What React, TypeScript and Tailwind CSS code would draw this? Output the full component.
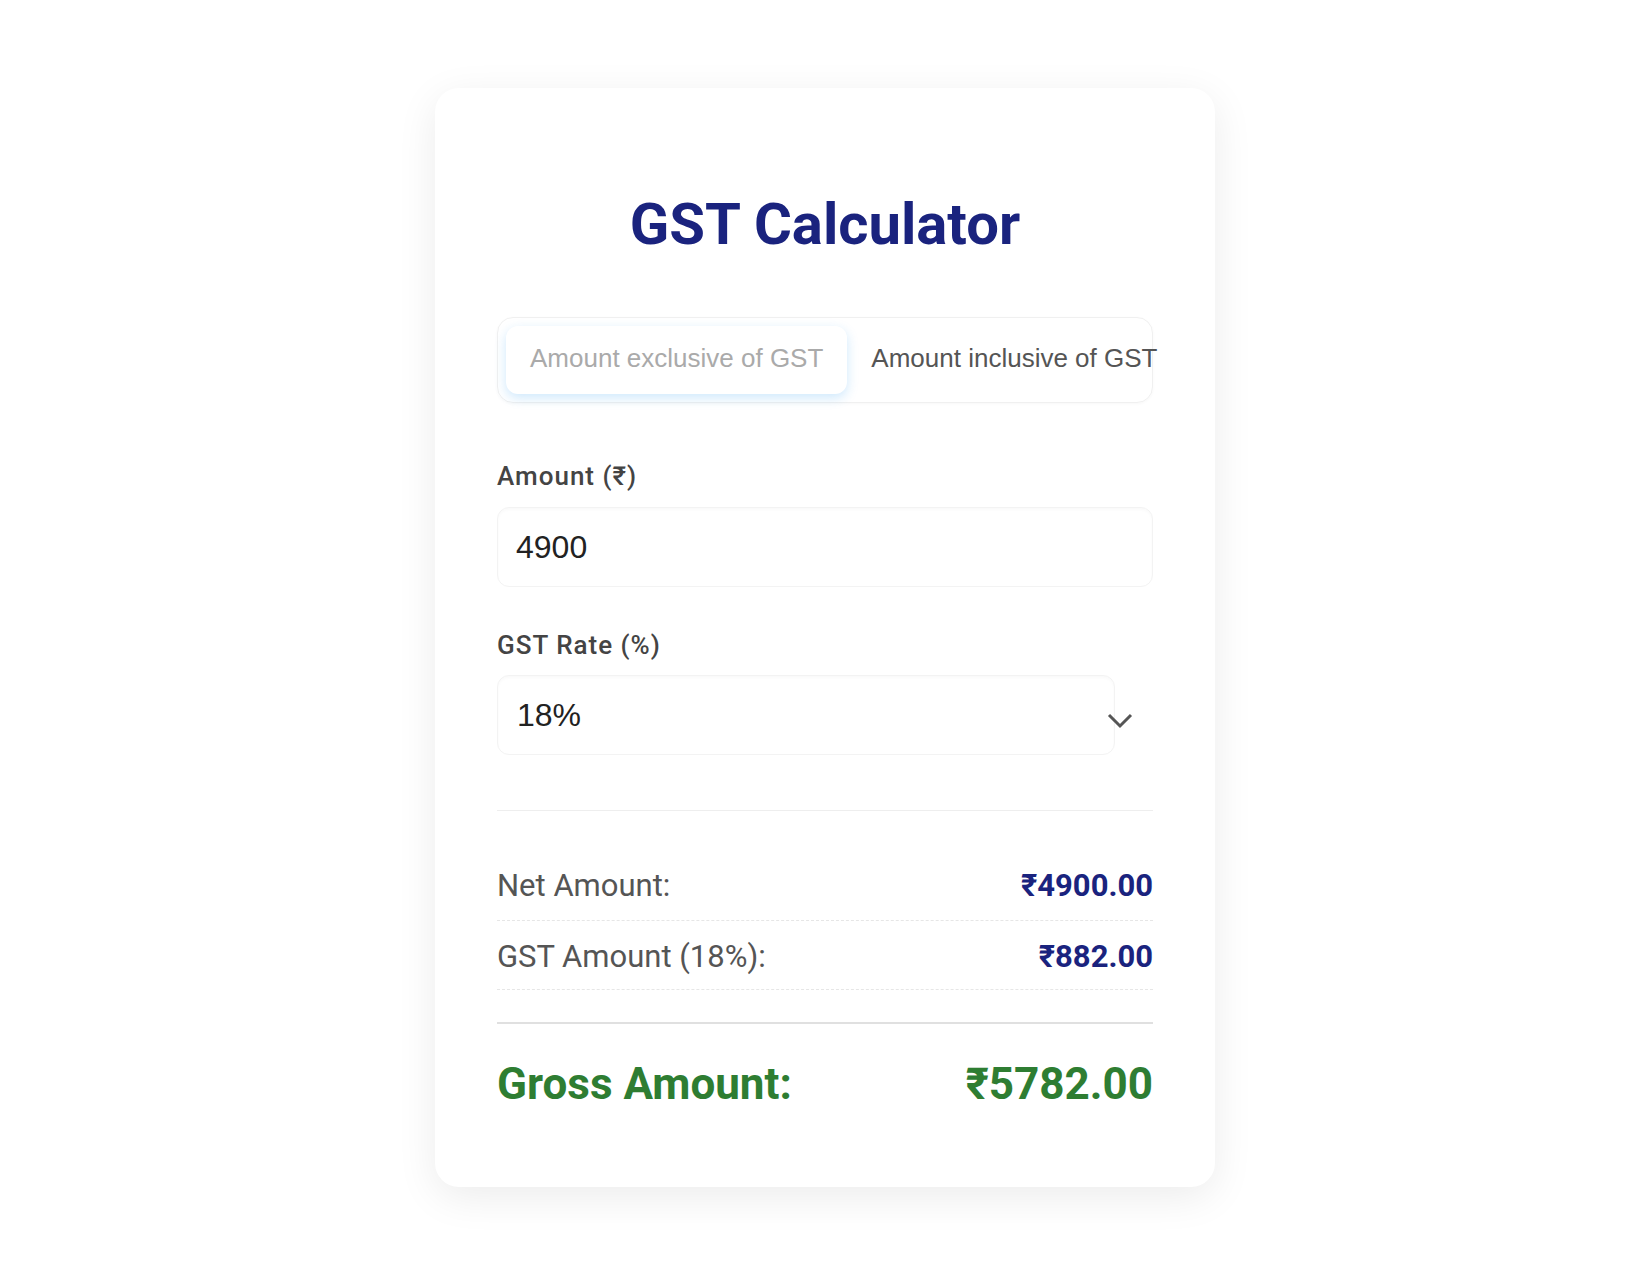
import { useState } from 'react'

type Mode = 'exclusive' | 'inclusive'

const rates = [0, 5, 12, 18, 28]

function App() {
  const [mode, setMode] = useState<Mode>('exclusive')
  const [amount, setAmount] = useState('4900')
  const [rate, setRate] = useState(18)

  const value = parseFloat(amount) || 0
  const net = mode === 'exclusive' ? value : value / (1 + rate / 100)
  const gst = (net * rate) / 100
  const gross = net + gst

  const tabClass = (active: boolean) =>
    active
      ? 'shrink-0 whitespace-nowrap rounded-[12px] bg-white px-6 pt-[17px] pb-[21px] text-[26px] leading-[30px] text-[#aaaaaa] shadow-[0_4px_12px_rgba(33,150,243,0.22)]'
      : 'shrink-0 whitespace-nowrap rounded-[12px] px-6 pt-[17px] pb-[21px] text-[26px] leading-[30px] text-[#555555]'

  return (
    <div className="min-h-screen bg-white pt-[88px] pb-[88px] font-['Roboto',sans-serif]">
      <div className="mx-auto w-[780px] rounded-[24px] bg-white px-[62px] pt-[106px] pb-[78px] shadow-[0_10px_40px_rgba(0,0,0,0.08)]">
        <h1 className="text-center text-[58px] leading-[60px] font-bold text-[#1a237e]">
          GST Calculator
        </h1>

        <div className="mt-[63px] flex rounded-[16px] border border-[#f0f0f0] p-2 font-['Liberation_Sans',Arial,sans-serif] shadow-[0_1px_3px_rgba(0,0,0,0.03)]">
          <button className={tabClass(mode === 'exclusive')} onClick={() => setMode('exclusive')}>
            Amount exclusive of GST
          </button>
          <button className={tabClass(mode === 'inclusive')} onClick={() => setMode('inclusive')}>
            Amount inclusive of GST
          </button>
        </div>

        <label className="mt-[59px] block text-[26px] leading-[28px] font-medium tracking-[1px] text-[#444444]">
          Amount (₹)
        </label>
        <input
          value={amount}
          onChange={(e) => setAmount(e.target.value)}
          className="mt-[17px] block h-[80px] w-full rounded-[12px] border border-[#f3f3f3] px-[18px] font-['Liberation_Sans',Arial,sans-serif] text-[32px] text-[#222222] shadow-[inset_0_2px_3px_rgba(0,0,0,0.025)] outline-none"
        />

        <label className="mt-[44px] block text-[26px] leading-[28px] font-medium tracking-[1px] text-[#444444]">
          GST Rate (%)
        </label>
        <div className="relative mt-[16px]">
          <select
            value={rate}
            onChange={(e) => setRate(Number(e.target.value))}
            className="block h-[80px] w-[618px] appearance-none rounded-[12px] border border-[#f3f3f3] bg-white px-[19px] font-['Liberation_Sans',Arial,sans-serif] text-[32px] text-[#222222] shadow-[inset_0_2px_3px_rgba(0,0,0,0.025)] outline-none"
          >
            {rates.map((r) => (
              <option key={r} value={r}>
                {r}%
              </option>
            ))}
          </select>
          <svg
            className="pointer-events-none absolute top-[38px] right-[20px]"
            width="26"
            height="16"
            viewBox="0 0 26 16"
            fill="none"
          >
            <polyline points="2,2 13,13 24,2" stroke="#555555" strokeWidth="3" />
          </svg>
        </div>

        <div className="mt-[55px] h-px bg-[#eeeeee]" />

        <div className="mt-[41px]">
          <div className="flex items-center justify-between border-b border-dashed border-[#e6e6e6] py-4 text-[31px] leading-[36px]">
            <span className="text-[#555555]">Net Amount:</span>
            <span className="font-bold text-[#1a237e]">₹{net.toFixed(2)}</span>
          </div>
          <div className="flex items-center justify-between border-b border-dashed border-[#e6e6e6] pt-[18px] pb-[14px] text-[31px] leading-[36px]">
            <span className="text-[#555555]">GST Amount ({rate}%):</span>
            <span className="font-bold text-[#1a237e]">₹{gst.toFixed(2)}</span>
          </div>
        </div>

        <div className="mt-[32px] h-[2px] bg-[#e0e0e0]" />

        <div className="mt-[35px] flex items-center justify-between text-[44px] leading-[50px] font-bold text-[#2e7d32]">
          <span>Gross Amount:</span>
          <span>₹{gross.toFixed(2)}</span>
        </div>
      </div>
    </div>
  )
}

export default App
